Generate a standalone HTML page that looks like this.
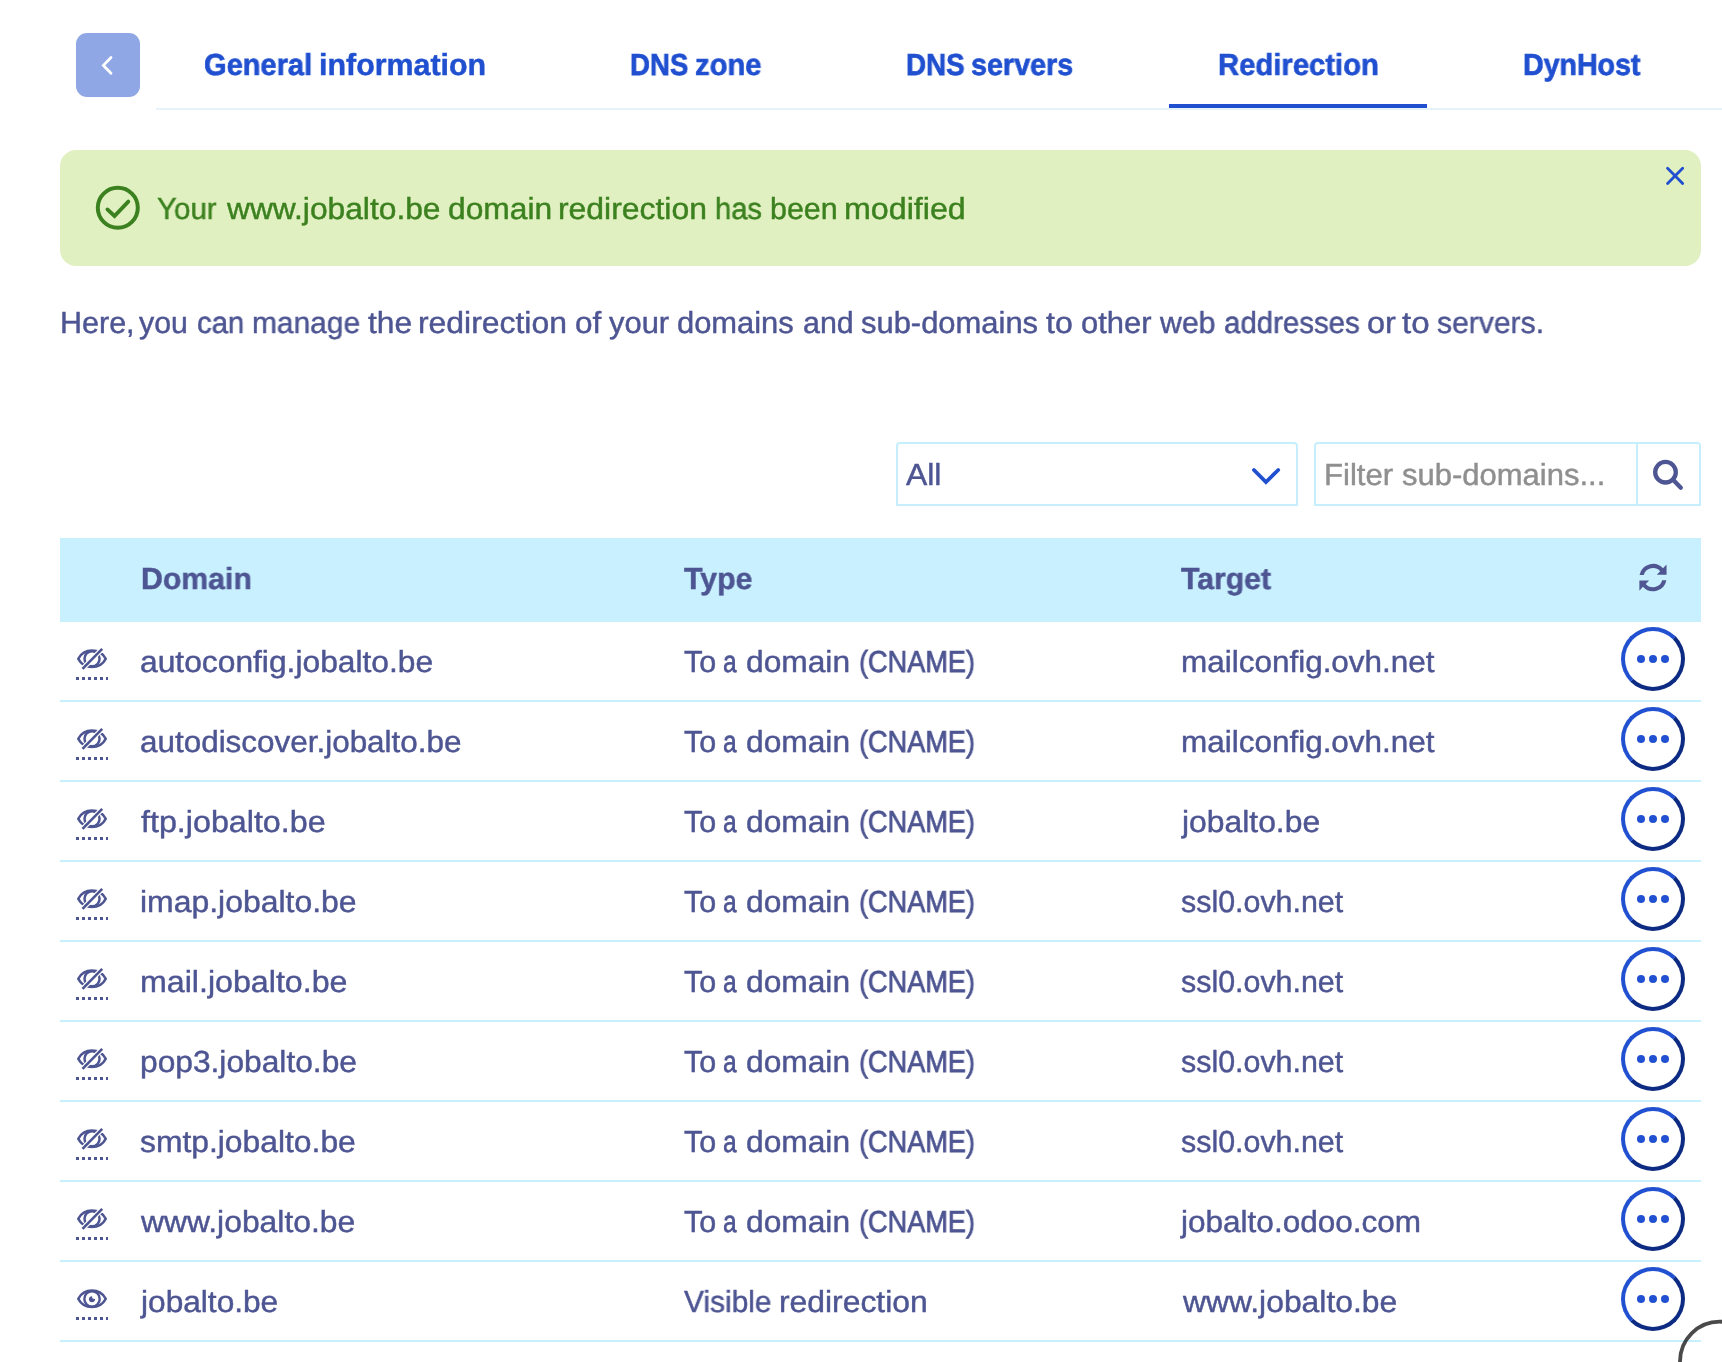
<!DOCTYPE html>
<html lang="en">
<head>
<meta charset="utf-8">
<title>Redirection</title>
<style>
html,body{margin:0;padding:0;background:#fff;}
body{width:1722px;height:1362px;position:relative;overflow:hidden;font-family:"Liberation Sans",sans-serif;}
.t{position:absolute;white-space:nowrap;font-size:30.4px;line-height:40px;text-rendering:geometricPrecision;transform-origin:0 0;font-weight:400;will-change:transform;}
.t{-webkit-text-stroke:0.45px currentColor;}
.t.b{font-weight:700;-webkit-text-stroke:0.45px currentColor;}
.abs{position:absolute;}
.back{left:76px;top:33px;width:64px;height:64px;border-radius:11px;background:#90a7e6;}
.tabline{left:156px;top:108px;width:1566px;height:2px;background:#e6f3fb;}
.tabsel{left:1169px;top:104px;width:258px;height:4px;background:#2050d0;}
.alert{left:60px;top:150px;width:1641px;height:116px;border-radius:16px;background:#e0f0c1;}
.select{left:896px;top:442px;width:398px;height:60px;border:2px solid #c5effd;border-radius:4px 4px 0 0;background:#fff;}
.search{left:1314px;top:442px;width:383px;height:60px;border:2px solid #c5effd;border-radius:4px 4px 0 0;background:#fff;}
.sdiv{left:1636px;top:444px;width:2px;height:60px;background:#c5effd;}
.thead{left:60px;top:538px;width:1641px;height:84px;background:#c8f0fe;}
.line{position:absolute;left:60px;width:1641px;height:2px;background:#c6f0fd;}
.eye{position:absolute;left:74px;}
.dots{position:absolute;left:76px;width:32px;height:3px;background:repeating-linear-gradient(90deg,#4d5592 0,#4d5592 3px,transparent 3px,transparent 6px);}
.more{position:absolute;left:1621px;width:56px;height:56px;border-radius:50%;border-style:solid;border-width:4px;border-color:#2151d1 #0e2b83 #0e2b83 #2151d1;background:#fff;}
.more i{position:absolute;top:24px;width:8px;height:8px;border-radius:50%;background:#2151d1;}
.more i:nth-child(1){left:12px;}
.more i:nth-child(2){left:24px;}
.more i:nth-child(3){left:36px;}
</style>
</head>
<body>
<!-- tabs -->
<div class="abs back"></div>
<svg class="abs" style="left:96px;top:53px" width="24" height="24" viewBox="0 0 24 24"><path d="M15 4.5 L7.4 12.4 L15 20.3" fill="none" stroke="#fff" stroke-width="2.8" stroke-linecap="round" stroke-linejoin="miter"/></svg>
<div class="abs tabline"></div>
<div class="abs tabsel"></div>

<!-- alert -->
<div class="abs alert"></div>
<svg class="abs" style="left:94px;top:184px" width="48" height="48" viewBox="0 0 48 48"><circle cx="23.8" cy="23.8" r="20" fill="none" stroke="#3c811f" stroke-width="4"/><path d="M13.4 25.4 L20.5 32 L34.3 17.6" fill="none" stroke="#3c811f" stroke-width="3.8" stroke-linecap="round" stroke-linejoin="miter"/></svg>
<svg class="abs" style="left:1663px;top:164px" width="24" height="24" viewBox="0 0 24 24"><path d="M4.55 4.15 L19.67 19.57 M19.67 4.15 L4.55 19.57" fill="none" stroke="#2050d0" stroke-width="2.8" stroke-linecap="round"/></svg>

<!-- filters -->
<div class="abs select"></div>
<svg class="abs" style="left:1248px;top:460px" width="36" height="32" viewBox="0 0 36 32"><path d="M5.96 10 L17.95 22 L30.2 10" fill="none" stroke="#2050d0" stroke-width="3.8" stroke-linecap="round" stroke-linejoin="miter"/></svg>
<div class="abs search"></div>
<div class="abs sdiv"></div>
<svg class="abs" style="left:1648px;top:454px" width="40" height="40" viewBox="0 0 40 40"><circle cx="17.5" cy="18.2" r="10.3" fill="none" stroke="#4d5592" stroke-width="4.3"/><path d="M24.8 25.500 L32.8 33.800" stroke="#4d5592" stroke-width="4.3" stroke-linecap="round"/></svg>

<!-- table -->
<div class="abs thead"></div>
<svg class="abs" style="left:1637px;top:562px" width="32" height="32" viewBox="0 0 32 32"><g transform="translate(15.96 15.6)" fill="#4f5692"><path d="M-13.41 -2.6 A13.66 13.66 0 0 1 10.04 -9.26 L13.1 -12.7 Q13.58 -13 13.58 -12.3 L13.58 -2.83 L3.85 -2.83 L7.22 -6.33 A9.6 9.6 0 0 0 -9.24 -2.6 Z"/><path transform="rotate(180)" d="M-13.41 -2.6 A13.66 13.66 0 0 1 10.04 -9.26 L13.1 -12.7 Q13.58 -13 13.58 -12.3 L13.58 -2.83 L3.85 -2.83 L7.22 -6.33 A9.6 9.6 0 0 0 -9.24 -2.6 Z"/></g></svg>
<div class="line" style="top:700px"></div>
<svg class="eye" style="top:645px" width="36" height="28" viewBox="0 0 36 28"><path d="M4.25 13.8 A15.63 15.63 0 0 1 31.75 13.8 A15.63 15.63 0 0 1 4.25 13.8 Z" fill="none" stroke="#4d5592" stroke-width="2.500" stroke-linejoin="round"/><circle cx="18.05" cy="13.8" r="7.55" fill="none" stroke="#4d5592" stroke-width="2.500"/><path d="M28.6 3.450 L8.100 24.300" stroke="#fff" stroke-width="5.0" stroke-linecap="butt"/><path d="M28.2 3.850 L8.500 23.900" stroke="#4d5592" stroke-width="2.600" stroke-linecap="butt"/></svg>
<div class="dots" style="top:677px"></div>
<div class="more" style="top:627px"><i></i><i></i><i></i></div>
<div class="line" style="top:780px"></div>
<svg class="eye" style="top:725px" width="36" height="28" viewBox="0 0 36 28"><path d="M4.25 13.8 A15.63 15.63 0 0 1 31.75 13.8 A15.63 15.63 0 0 1 4.25 13.8 Z" fill="none" stroke="#4d5592" stroke-width="2.500" stroke-linejoin="round"/><circle cx="18.05" cy="13.8" r="7.55" fill="none" stroke="#4d5592" stroke-width="2.500"/><path d="M28.6 3.450 L8.100 24.300" stroke="#fff" stroke-width="5.0" stroke-linecap="butt"/><path d="M28.2 3.850 L8.500 23.900" stroke="#4d5592" stroke-width="2.600" stroke-linecap="butt"/></svg>
<div class="dots" style="top:757px"></div>
<div class="more" style="top:707px"><i></i><i></i><i></i></div>
<div class="line" style="top:860px"></div>
<svg class="eye" style="top:805px" width="36" height="28" viewBox="0 0 36 28"><path d="M4.25 13.8 A15.63 15.63 0 0 1 31.75 13.8 A15.63 15.63 0 0 1 4.25 13.8 Z" fill="none" stroke="#4d5592" stroke-width="2.500" stroke-linejoin="round"/><circle cx="18.05" cy="13.8" r="7.55" fill="none" stroke="#4d5592" stroke-width="2.500"/><path d="M28.6 3.450 L8.100 24.300" stroke="#fff" stroke-width="5.0" stroke-linecap="butt"/><path d="M28.2 3.850 L8.500 23.900" stroke="#4d5592" stroke-width="2.600" stroke-linecap="butt"/></svg>
<div class="dots" style="top:837px"></div>
<div class="more" style="top:787px"><i></i><i></i><i></i></div>
<div class="line" style="top:940px"></div>
<svg class="eye" style="top:885px" width="36" height="28" viewBox="0 0 36 28"><path d="M4.25 13.8 A15.63 15.63 0 0 1 31.75 13.8 A15.63 15.63 0 0 1 4.25 13.8 Z" fill="none" stroke="#4d5592" stroke-width="2.500" stroke-linejoin="round"/><circle cx="18.05" cy="13.8" r="7.55" fill="none" stroke="#4d5592" stroke-width="2.500"/><path d="M28.6 3.450 L8.100 24.300" stroke="#fff" stroke-width="5.0" stroke-linecap="butt"/><path d="M28.2 3.850 L8.500 23.900" stroke="#4d5592" stroke-width="2.600" stroke-linecap="butt"/></svg>
<div class="dots" style="top:917px"></div>
<div class="more" style="top:867px"><i></i><i></i><i></i></div>
<div class="line" style="top:1020px"></div>
<svg class="eye" style="top:965px" width="36" height="28" viewBox="0 0 36 28"><path d="M4.25 13.8 A15.63 15.63 0 0 1 31.75 13.8 A15.63 15.63 0 0 1 4.25 13.8 Z" fill="none" stroke="#4d5592" stroke-width="2.500" stroke-linejoin="round"/><circle cx="18.05" cy="13.8" r="7.55" fill="none" stroke="#4d5592" stroke-width="2.500"/><path d="M28.6 3.450 L8.100 24.300" stroke="#fff" stroke-width="5.0" stroke-linecap="butt"/><path d="M28.2 3.850 L8.500 23.900" stroke="#4d5592" stroke-width="2.600" stroke-linecap="butt"/></svg>
<div class="dots" style="top:997px"></div>
<div class="more" style="top:947px"><i></i><i></i><i></i></div>
<div class="line" style="top:1100px"></div>
<svg class="eye" style="top:1045px" width="36" height="28" viewBox="0 0 36 28"><path d="M4.25 13.8 A15.63 15.63 0 0 1 31.75 13.8 A15.63 15.63 0 0 1 4.25 13.8 Z" fill="none" stroke="#4d5592" stroke-width="2.500" stroke-linejoin="round"/><circle cx="18.05" cy="13.8" r="7.55" fill="none" stroke="#4d5592" stroke-width="2.500"/><path d="M28.6 3.450 L8.100 24.300" stroke="#fff" stroke-width="5.0" stroke-linecap="butt"/><path d="M28.2 3.850 L8.500 23.900" stroke="#4d5592" stroke-width="2.600" stroke-linecap="butt"/></svg>
<div class="dots" style="top:1077px"></div>
<div class="more" style="top:1027px"><i></i><i></i><i></i></div>
<div class="line" style="top:1180px"></div>
<svg class="eye" style="top:1125px" width="36" height="28" viewBox="0 0 36 28"><path d="M4.25 13.8 A15.63 15.63 0 0 1 31.75 13.8 A15.63 15.63 0 0 1 4.25 13.8 Z" fill="none" stroke="#4d5592" stroke-width="2.500" stroke-linejoin="round"/><circle cx="18.05" cy="13.8" r="7.55" fill="none" stroke="#4d5592" stroke-width="2.500"/><path d="M28.6 3.450 L8.100 24.300" stroke="#fff" stroke-width="5.0" stroke-linecap="butt"/><path d="M28.2 3.850 L8.500 23.900" stroke="#4d5592" stroke-width="2.600" stroke-linecap="butt"/></svg>
<div class="dots" style="top:1157px"></div>
<div class="more" style="top:1107px"><i></i><i></i><i></i></div>
<div class="line" style="top:1260px"></div>
<svg class="eye" style="top:1205px" width="36" height="28" viewBox="0 0 36 28"><path d="M4.25 13.8 A15.63 15.63 0 0 1 31.75 13.8 A15.63 15.63 0 0 1 4.25 13.8 Z" fill="none" stroke="#4d5592" stroke-width="2.500" stroke-linejoin="round"/><circle cx="18.05" cy="13.8" r="7.55" fill="none" stroke="#4d5592" stroke-width="2.500"/><path d="M28.6 3.450 L8.100 24.300" stroke="#fff" stroke-width="5.0" stroke-linecap="butt"/><path d="M28.2 3.850 L8.500 23.900" stroke="#4d5592" stroke-width="2.600" stroke-linecap="butt"/></svg>
<div class="dots" style="top:1237px"></div>
<div class="more" style="top:1187px"><i></i><i></i><i></i></div>
<div class="line" style="top:1340px"></div>
<svg class="eye" style="top:1285px" width="36" height="28" viewBox="0 0 36 28"><path d="M4.25 13.8 A15.63 15.63 0 0 1 31.75 13.8 A15.63 15.63 0 0 1 4.25 13.8 Z" fill="none" stroke="#4d5592" stroke-width="2.500" stroke-linejoin="round"/><circle cx="18.03" cy="13.9" r="7.7" fill="none" stroke="#4d5592" stroke-width="2.400"/><circle cx="17.97" cy="14.2" r="3.0" fill="#4d5592"/><circle cx="20.3" cy="11.700" r="2.3" fill="#fff"/></svg>
<div class="dots" style="top:1317px"></div>
<div class="more" style="top:1267px"><i></i><i></i><i></i></div>

<!-- text -->
<span id="t0" class="t b" style="left:203.91px;top:45.00px;color:#2050d0;-webkit-text-stroke-width:0.64px;transform:scaleX(0.9561)">General</span>
<span id="t1" class="t b" style="left:318.90px;top:45.00px;color:#2050d0;transform:scaleX(1.0000)">information</span>
<span id="t2" class="t b" style="left:630.17px;top:45.00px;color:#2050d0;-webkit-text-stroke-width:0.75px;transform:scaleX(0.9077)">DNS</span>
<span id="t3" class="t b" style="left:695.33px;top:45.00px;color:#2050d0;-webkit-text-stroke-width:0.62px;transform:scaleX(0.9611)">zone</span>
<span id="t4" class="t b" style="left:906.35px;top:45.00px;color:#2050d0;-webkit-text-stroke-width:0.75px;transform:scaleX(0.9126)">DNS</span>
<span id="t5" class="t b" style="left:971.14px;top:45.00px;color:#2050d0;-webkit-text-stroke-width:0.69px;transform:scaleX(0.9448)">servers</span>
<span id="t6" class="t b" style="left:1218.07px;top:45.00px;color:#2050d0;-webkit-text-stroke-width:0.61px;transform:scaleX(0.9628)">Redirection</span>
<span id="t7" class="t b" style="left:1522.72px;top:45.00px;color:#2050d0;-webkit-text-stroke-width:0.72px;transform:scaleX(0.9397)">DynHost</span>
<span id="t8" class="t" style="left:157.34px;top:189.00px;color:#3c811f;transform:scaleX(0.9705)">Your</span>
<span id="t9" class="t" style="left:226.72px;top:189.00px;color:#3c811f;transform:scaleX(1.0446)">www.jobalto.be</span>
<span id="t10" class="t" style="left:447.95px;top:189.00px;color:#3c811f;transform:scaleX(1.0450)">domain</span>
<span id="t11" class="t" style="left:558.28px;top:189.00px;color:#3c811f;transform:scaleX(1.0496)">redirection</span>
<span id="t12" class="t" style="left:715.00px;top:189.00px;color:#3c811f;-webkit-text-stroke-width:0.57px;transform:scaleX(0.9589)">has</span>
<span id="t13" class="t" style="left:769.66px;top:189.00px;color:#3c811f;transform:scaleX(0.9954)">been</span>
<span id="t14" class="t" style="left:843.86px;top:189.00px;color:#3c811f;transform:scaleX(1.0594)">modified</span>
<span id="t15" class="t" style="left:60.14px;top:303.00px;color:#4d5592;transform:scaleX(1.0037)">Here,</span>
<span id="t16" class="t" style="left:138.90px;top:303.00px;color:#4d5592;transform:scaleX(0.9978)">you</span>
<span id="t17" class="t" style="left:196.64px;top:303.00px;color:#4d5592;-webkit-text-stroke-width:0.55px;transform:scaleX(0.9644)">can</span>
<span id="t18" class="t" style="left:251.61px;top:303.00px;color:#4d5592;transform:scaleX(0.9843)">manage</span>
<span id="t19" class="t" style="left:368.38px;top:303.00px;color:#4d5592;transform:scaleX(1.0416)">the</span>
<span id="t20" class="t" style="left:418.28px;top:303.00px;color:#4d5592;transform:scaleX(1.0496)">redirection</span>
<span id="t21" class="t" style="left:574.96px;top:303.00px;color:#4d5592;transform:scaleX(1.0355)">of</span>
<span id="t22" class="t" style="left:608.88px;top:303.00px;color:#4d5592;transform:scaleX(1.0175)">your</span>
<span id="t23" class="t" style="left:676.98px;top:303.00px;color:#4d5592;transform:scaleX(1.0162)">domains</span>
<span id="t24" class="t" style="left:802.60px;top:303.00px;color:#4d5592;transform:scaleX(0.9910)">and</span>
<span id="t25" class="t" style="left:861.08px;top:303.00px;color:#4d5592;transform:scaleX(1.0177)">sub-domains</span>
<span id="t26" class="t" style="left:1045.76px;top:303.00px;color:#4d5592;transform:scaleX(1.0544)">to</span>
<span id="t27" class="t" style="left:1080.58px;top:303.00px;color:#4d5592;transform:scaleX(1.0166)">other</span>
<span id="t28" class="t" style="left:1159.73px;top:303.00px;color:#4d5592;transform:scaleX(0.9957)">web</span>
<span id="t29" class="t" style="left:1224.03px;top:303.00px;color:#4d5592;-webkit-text-stroke-width:0.54px;transform:scaleX(0.9682)">addresses</span>
<span id="t30" class="t" style="left:1366.51px;top:303.00px;color:#4d5592;transform:scaleX(1.0674)">or</span>
<span id="t31" class="t" style="left:1401.92px;top:303.00px;color:#4d5592;transform:scaleX(1.0876)">to</span>
<span id="t32" class="t" style="left:1436.70px;top:303.00px;color:#4d5592;transform:scaleX(0.9897)">servers.</span>
<span id="t33" class="t" style="left:905.67px;top:455.00px;color:#4d5592;transform:scaleX(1.0490)">All</span>
<span id="t34" class="t" style="left:1323.89px;top:455.00px;color:#8f8f8f;transform:scaleX(1.0239)">Filter</span>
<span id="t35" class="t" style="left:1401.88px;top:455.00px;color:#8f8f8f;transform:scaleX(1.0197)">sub-domains...</span>
<span id="t36" class="t b" style="left:140.80px;top:559.00px;color:#4d5592;transform:scaleX(0.9941)">Domain</span>
<span id="t37" class="t b" style="left:684.44px;top:559.00px;color:#4d5592;transform:scaleX(0.9954)">Type</span>
<span id="t38" class="t b" style="left:1181.44px;top:559.00px;color:#4d5592;transform:scaleX(0.9932)">Target</span>
<span id="t39" class="t" style="left:139.92px;top:642.00px;color:#4d5592;transform:scaleX(1.0453)">autoconfig.jobalto.be</span>
<span id="t40" class="t" style="left:683.82px;top:642.00px;color:#4d5592;transform:scaleX(1.0033)">To</span>
<span id="t41" class="t" style="left:723.31px;top:642.00px;color:#4d5592;-webkit-text-stroke-width:0.75px;transform:scaleX(0.8039)">a</span>
<span id="t42" class="t" style="left:746.14px;top:642.00px;color:#4d5592;transform:scaleX(1.0440)">domain</span>
<span id="t43" class="t" style="left:858.72px;top:642.00px;color:#4d5592;-webkit-text-stroke-width:0.75px;transform:scaleX(0.8930)">(CNAME)</span>
<span id="t44" class="t" style="left:1180.50px;top:642.00px;color:#4d5592;transform:scaleX(1.0352)">mailconfig.ovh.net</span>
<span id="t45" class="t" style="left:139.94px;top:722.00px;color:#4d5592;transform:scaleX(1.0340)">autodiscover.jobalto.be</span>
<span id="t46" class="t" style="left:683.82px;top:722.00px;color:#4d5592;transform:scaleX(1.0033)">To</span>
<span id="t47" class="t" style="left:723.31px;top:722.00px;color:#4d5592;-webkit-text-stroke-width:0.75px;transform:scaleX(0.8039)">a</span>
<span id="t48" class="t" style="left:746.14px;top:722.00px;color:#4d5592;transform:scaleX(1.0440)">domain</span>
<span id="t49" class="t" style="left:858.72px;top:722.00px;color:#4d5592;-webkit-text-stroke-width:0.75px;transform:scaleX(0.8930)">(CNAME)</span>
<span id="t50" class="t" style="left:1180.50px;top:722.00px;color:#4d5592;transform:scaleX(1.0352)">mailconfig.ovh.net</span>
<span id="t51" class="t" style="left:140.95px;top:802.00px;color:#4d5592;transform:scaleX(1.0607)">ftp.jobalto.be</span>
<span id="t52" class="t" style="left:683.82px;top:802.00px;color:#4d5592;transform:scaleX(1.0033)">To</span>
<span id="t53" class="t" style="left:723.31px;top:802.00px;color:#4d5592;-webkit-text-stroke-width:0.75px;transform:scaleX(0.8039)">a</span>
<span id="t54" class="t" style="left:746.14px;top:802.00px;color:#4d5592;transform:scaleX(1.0440)">domain</span>
<span id="t55" class="t" style="left:858.72px;top:802.00px;color:#4d5592;-webkit-text-stroke-width:0.75px;transform:scaleX(0.8930)">(CNAME)</span>
<span id="t56" class="t" style="left:1181.75px;top:802.00px;color:#4d5592;transform:scaleX(1.0479)">jobalto.be</span>
<span id="t57" class="t" style="left:139.90px;top:882.00px;color:#4d5592;transform:scaleX(1.0510)">imap.jobalto.be</span>
<span id="t58" class="t" style="left:683.82px;top:882.00px;color:#4d5592;transform:scaleX(1.0033)">To</span>
<span id="t59" class="t" style="left:723.31px;top:882.00px;color:#4d5592;-webkit-text-stroke-width:0.75px;transform:scaleX(0.8039)">a</span>
<span id="t60" class="t" style="left:746.14px;top:882.00px;color:#4d5592;transform:scaleX(1.0440)">domain</span>
<span id="t61" class="t" style="left:858.72px;top:882.00px;color:#4d5592;-webkit-text-stroke-width:0.75px;transform:scaleX(0.8930)">(CNAME)</span>
<span id="t62" class="t" style="left:1180.89px;top:882.00px;color:#4d5592;transform:scaleX(1.0001)">ssl0.ovh.net</span>
<span id="t63" class="t" style="left:139.86px;top:962.00px;color:#4d5592;transform:scaleX(1.0587)">mail.jobalto.be</span>
<span id="t64" class="t" style="left:683.82px;top:962.00px;color:#4d5592;transform:scaleX(1.0033)">To</span>
<span id="t65" class="t" style="left:723.31px;top:962.00px;color:#4d5592;-webkit-text-stroke-width:0.75px;transform:scaleX(0.8039)">a</span>
<span id="t66" class="t" style="left:746.14px;top:962.00px;color:#4d5592;transform:scaleX(1.0440)">domain</span>
<span id="t67" class="t" style="left:858.72px;top:962.00px;color:#4d5592;-webkit-text-stroke-width:0.75px;transform:scaleX(0.8930)">(CNAME)</span>
<span id="t68" class="t" style="left:1180.89px;top:962.00px;color:#4d5592;transform:scaleX(1.0001)">ssl0.ovh.net</span>
<span id="t69" class="t" style="left:139.97px;top:1042.00px;color:#4d5592;transform:scaleX(1.0436)">pop3.jobalto.be</span>
<span id="t70" class="t" style="left:683.82px;top:1042.00px;color:#4d5592;transform:scaleX(1.0033)">To</span>
<span id="t71" class="t" style="left:723.31px;top:1042.00px;color:#4d5592;-webkit-text-stroke-width:0.75px;transform:scaleX(0.8039)">a</span>
<span id="t72" class="t" style="left:746.14px;top:1042.00px;color:#4d5592;transform:scaleX(1.0440)">domain</span>
<span id="t73" class="t" style="left:858.72px;top:1042.00px;color:#4d5592;-webkit-text-stroke-width:0.75px;transform:scaleX(0.8930)">(CNAME)</span>
<span id="t74" class="t" style="left:1180.89px;top:1042.00px;color:#4d5592;transform:scaleX(1.0001)">ssl0.ovh.net</span>
<span id="t75" class="t" style="left:140.44px;top:1122.00px;color:#4d5592;transform:scaleX(1.0469)">smtp.jobalto.be</span>
<span id="t76" class="t" style="left:683.82px;top:1122.00px;color:#4d5592;transform:scaleX(1.0033)">To</span>
<span id="t77" class="t" style="left:723.31px;top:1122.00px;color:#4d5592;-webkit-text-stroke-width:0.75px;transform:scaleX(0.8039)">a</span>
<span id="t78" class="t" style="left:746.14px;top:1122.00px;color:#4d5592;transform:scaleX(1.0440)">domain</span>
<span id="t79" class="t" style="left:858.72px;top:1122.00px;color:#4d5592;-webkit-text-stroke-width:0.75px;transform:scaleX(0.8930)">(CNAME)</span>
<span id="t80" class="t" style="left:1180.89px;top:1122.00px;color:#4d5592;transform:scaleX(1.0001)">ssl0.ovh.net</span>
<span id="t81" class="t" style="left:141.31px;top:1202.00px;color:#4d5592;transform:scaleX(1.0481)">www.jobalto.be</span>
<span id="t82" class="t" style="left:683.82px;top:1202.00px;color:#4d5592;transform:scaleX(1.0033)">To</span>
<span id="t83" class="t" style="left:723.31px;top:1202.00px;color:#4d5592;-webkit-text-stroke-width:0.75px;transform:scaleX(0.8039)">a</span>
<span id="t84" class="t" style="left:746.14px;top:1202.00px;color:#4d5592;transform:scaleX(1.0440)">domain</span>
<span id="t85" class="t" style="left:858.72px;top:1202.00px;color:#4d5592;-webkit-text-stroke-width:0.75px;transform:scaleX(0.8930)">(CNAME)</span>
<span id="t86" class="t" style="left:1181.13px;top:1202.00px;color:#4d5592;transform:scaleX(1.0374)">jobalto.odoo.com</span>
<span id="t87" class="t" style="left:141.13px;top:1282.00px;color:#4d5592;transform:scaleX(1.0411)">jobalto.be</span>
<span id="t88" class="t" style="left:684.24px;top:1282.00px;color:#4d5592;transform:scaleX(0.9834)">Visible</span>
<span id="t89" class="t" style="left:779.29px;top:1282.00px;color:#4d5592;transform:scaleX(1.0474)">redirection</span>
<span id="t90" class="t" style="left:1182.95px;top:1282.00px;color:#4d5592;transform:scaleX(1.0481)">www.jobalto.be</span>

<svg class="abs" style="left:1662px;top:1302px;mix-blend-mode:multiply" width="60" height="60" viewBox="0 0 60 60"><circle cx="57.7" cy="59.4" r="39.7" fill="none" stroke="#4a4a4a" stroke-width="3.8"/></svg>
</body>
</html>
